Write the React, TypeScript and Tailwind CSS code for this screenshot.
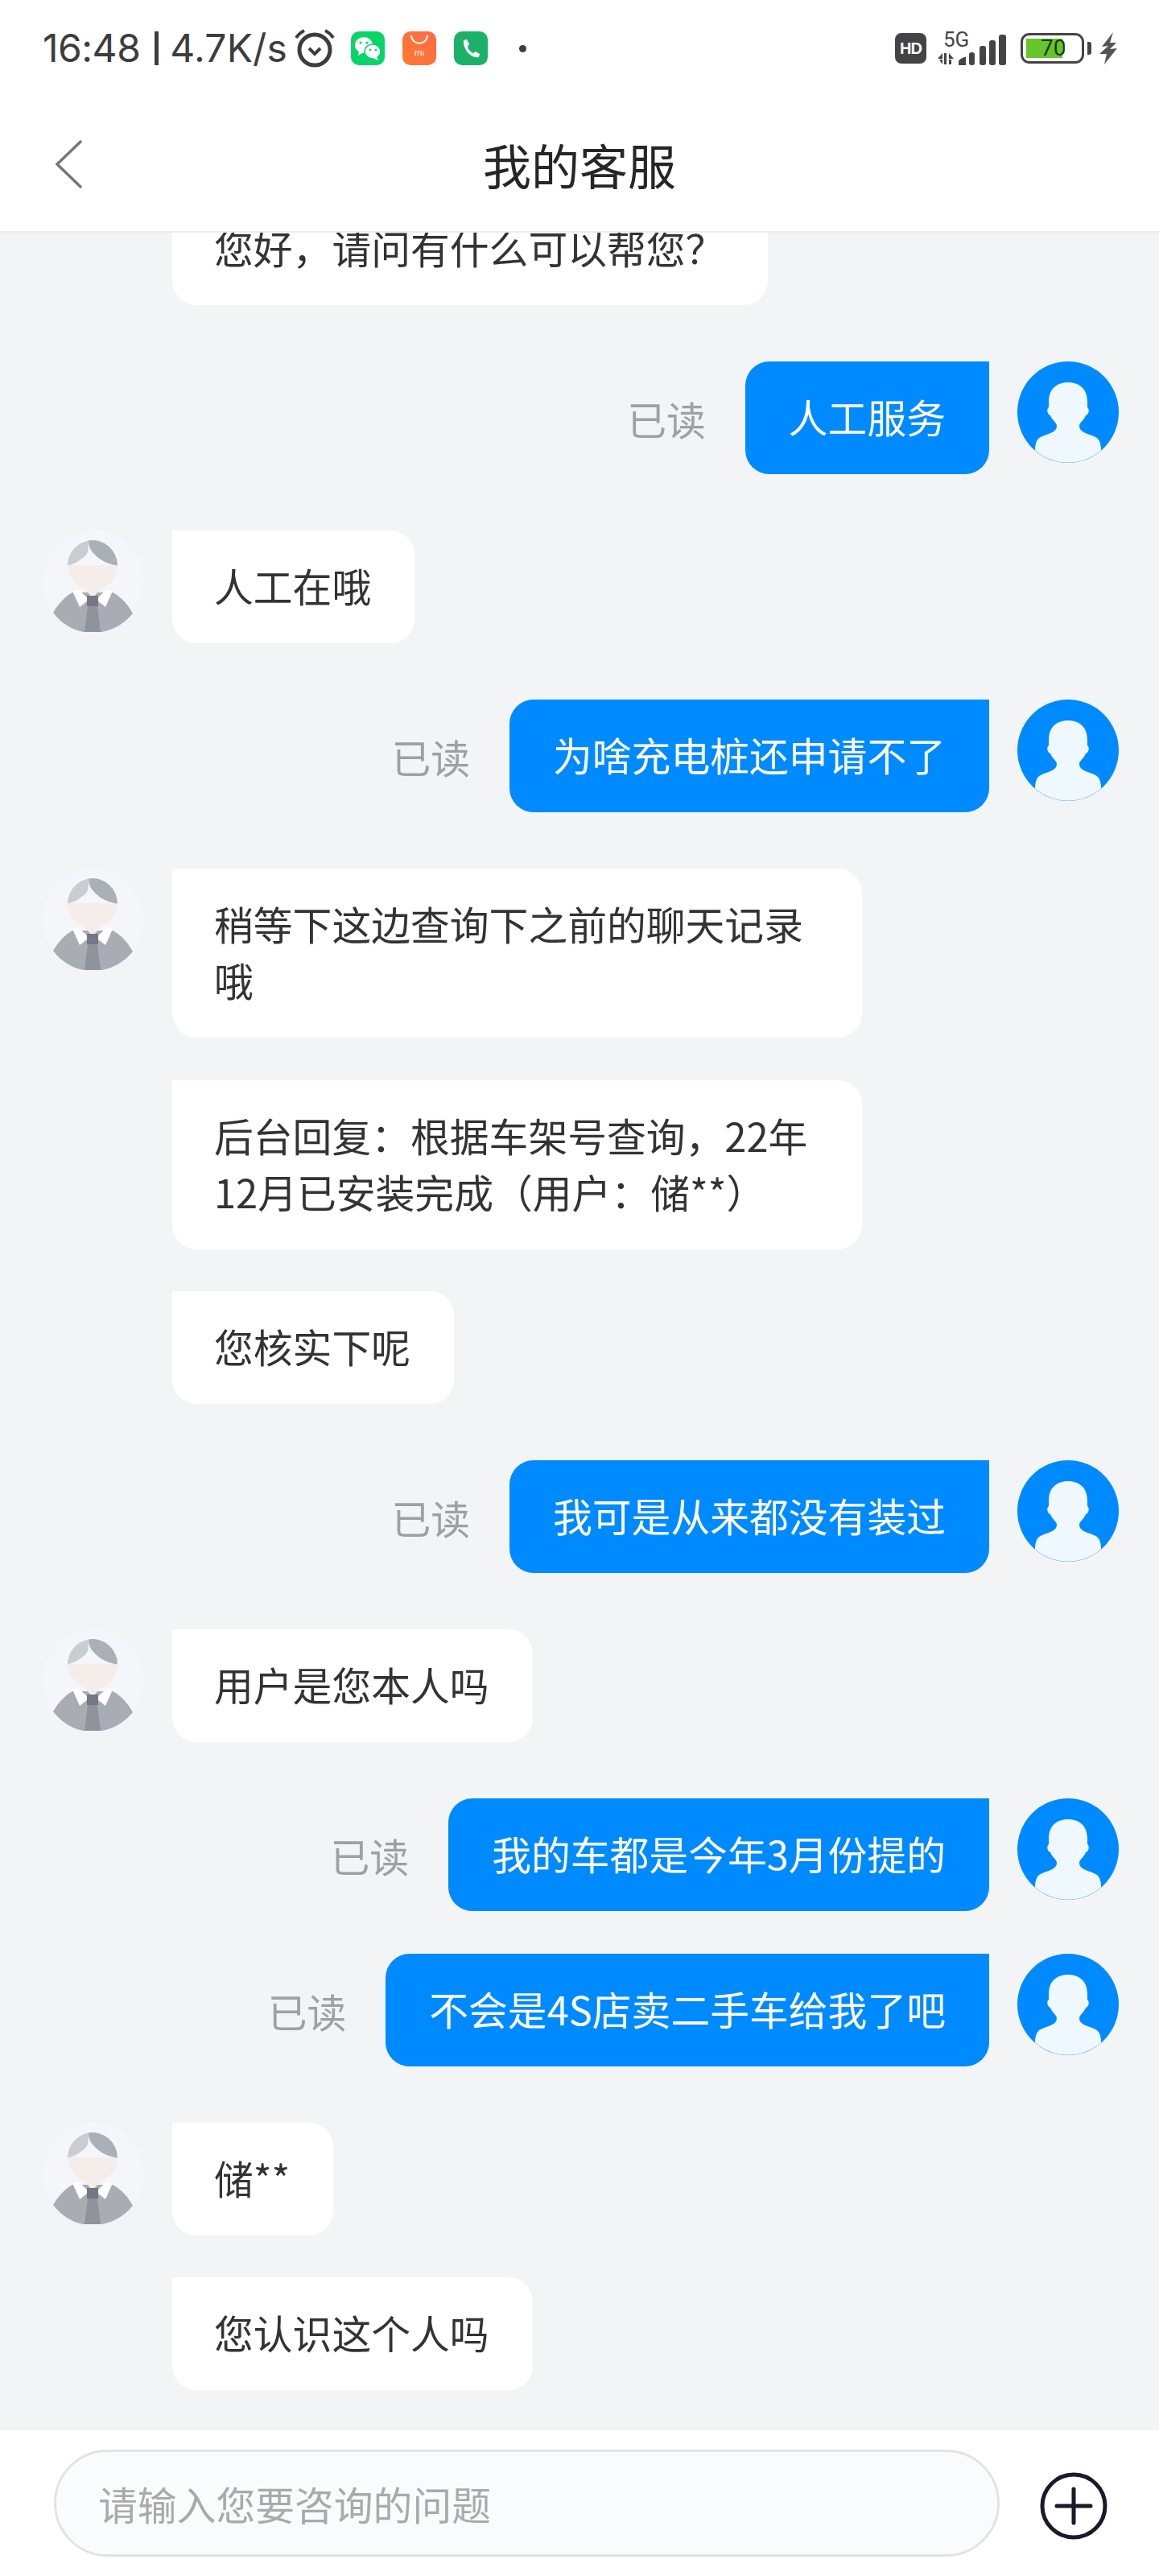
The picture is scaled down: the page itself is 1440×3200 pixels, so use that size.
const CJK = "font-['Noto_Sans_CJK_SC','Noto_Sans',sans-serif]";

type Msg = { from: "me" | "agent"; text: string; mt: string; avatar?: boolean };

// 全角标点用转义写,避免被编辑器替换
const messages: Msg[] = [
  { from: "agent", text: "您好\uFF0C请问有什么可以帮您\uFF1F", mt: "mt-0" },
  { from: "me", text: "人工服务", mt: "mt-[70px]" },
  { from: "agent", text: "人工在哦", mt: "mt-[70px]", avatar: true },
  { from: "me", text: "为啥充电桩还申请不了", mt: "mt-[70px]" },
  { from: "agent", text: "稍等下这边查询下之前的聊天记录哦", mt: "mt-[70px]", avatar: true },
  { from: "agent", text: "后台回复\uFF1A根据车架号查询\uFF0C22年12月已安装完成\uFF08用户\uFF1A储**\uFF09", mt: "mt-[53px]" },
  { from: "agent", text: "您核实下呢", mt: "mt-[52px]" },
  { from: "me", text: "我可是从来都没有装过", mt: "mt-[70px]" },
  { from: "agent", text: "用户是您本人吗", mt: "mt-[70px]", avatar: true },
  { from: "me", text: "我的车都是今年3月份提的", mt: "mt-[70px]" },
  { from: "me", text: "不会是4S店卖二手车给我了吧", mt: "mt-[53px]" },
  { from: "agent", text: "储**", mt: "mt-[70px]", avatar: true },
  { from: "agent", text: "您认识这个人吗", mt: "mt-[52px]" },
];

function AgentAvatar() {
  return (
    <svg width="126" height="126" viewBox="0 0 126 126" className="shrink-0">
      <circle cx="63" cy="63" r="63" fill="#f5f6f9" />
      <path d="M13 102 C20 90 28 82 37 77 L87 77 C97 82 106 92 112 103 C100 118 82 127 62 127 C42 127 25 118 13 102 Z" fill="#a9acb3" />
      <path d="M31 43 A31 31 0 0 0 62 74 A31 31 0 0 0 93 43 Z" fill="#f4ede9" />
      <path d="M48 68 L76 68 L62 84 Z" fill="#f4ede9" />
      <path d="M31 43.5 A31.5 31.5 0 0 1 57 12.4 C56 22 60 28 47 36 C42 40 37 42 31 43.5 Z" fill="#c9cdd2" />
      <path d="M57 12.4 A31.5 31.5 0 0 1 93 43.5 C80 42 70 36 64 29 C60 25 57 20 57 12.4 Z" fill="#a9b0b8" />
      <path d="M37 75 L44 73 L55 83 L55 88 L46 95 Z" fill="#ffffff" />
      <path d="M87 75 L80 73 L69 83 L69 88 L78 95 Z" fill="#ffffff" />
      <path d="M56 94 L68 94 L72 126 L52 126 Z" fill="#90939c" />
      <rect x="55" y="81" width="14" height="13" fill="#757784" />
    </svg>
  );
}

function UserAvatar() {
  return (
    <svg width="126" height="126" viewBox="0 0 126 126" className="shrink-0">
      <circle cx="63" cy="63" r="63" fill="#008aff" />
      <path
        d="M63 26 C48 26 39 35 39 50 L39 57 C36 59 37 66 41 67 C43 73 49 76 49 80 C49 88 40 89 31 93 C25 95 22 100 22 110.5 A63 63 0 0 0 104 110.5 C104 100 101 95 95 93 C86 89 77 88 77 80 C77 76 83 73 85 67 C89 66 90 59 87 57 L87 50 C87 35 78 26 63 26 Z"
        fill="#f0f8ff"
      />
    </svg>
  );
}

function Row({ msg }: { msg: Msg }) {
  if (msg.from === "me") {
    return (
      <div className={`flex items-start justify-end ${msg.mt}`}>
        <div className="mr-[49px] flex h-[140px] items-center pt-[2px] text-[48.8px] text-[#a0a0a0]">已读</div>
        <div className="mr-[35px] rounded-b-[30px] rounded-tl-[30px] bg-[#008aff] px-[54px] pb-[37px] pt-[33px] text-[48.8px] leading-[70px] text-white">
          {msg.text}
        </div>
        <UserAvatar />
      </div>
    );
  }
  return (
    <div className={`flex items-start ${msg.mt}`}>
      {/* 连续消息不重复显示头像 */}
      {msg.avatar ? <AgentAvatar /> : <div className="w-[126px] shrink-0" />}
      <div className="ml-[35px] max-w-[857px] rounded-[30px] rounded-tl-none bg-white pb-[37px] pl-[52px] pr-[54px] pt-[33px] text-[48.8px] leading-[70px] text-[#333333]">
        {msg.text}
      </div>
    </div>
  );
}

function StatusBar() {
  return (
    <div className="flex h-[120px] items-center justify-between pl-[53px] pr-[52px]">
      <div className="flex items-center font-['Inter',sans-serif] text-[48px] leading-none text-[#3d3d3d]">
        <span className="tracking-[-0.5px]">16:48</span>
        <span className="ml-[18px] h-[42px] w-[5px] bg-[#3d3d3d]" />
        <span className="ml-[14px] tracking-[0.2px]">4.7K/s</span>
        <svg width="52" height="48" viewBox="0 0 52 48" className="ml-[8px]">
          <circle cx="26" cy="26" r="19" fill="none" stroke="#3d3d3d" strokeWidth="5" />
          <path d="M19 24 L26 31 L33 24" fill="none" stroke="#3d3d3d" strokeWidth="4" />
          <path d="M3 11 C6 6 9 4 13 2" fill="none" stroke="#3d3d3d" strokeWidth="4" />
          <path d="M49 11 C46 6 43 4 39 2" fill="none" stroke="#3d3d3d" strokeWidth="4" />
        </svg>
        <svg width="42" height="42" viewBox="0 0 42 42" className="ml-[19px]">
          <rect width="42" height="42" rx="10" fill="#07d568" />
          <ellipse cx="16" cy="17" rx="11" ry="10" fill="#ffffff" />
          <path d="M10 24 L9 30 L16 26 Z" fill="#ffffff" />
          <ellipse cx="27" cy="25" rx="10" ry="9" fill="#ffffff" stroke="#07d568" strokeWidth="1.5" />
          <path d="M32 31 L34 36 L27 33 Z" fill="#ffffff" />
          <circle cx="12" cy="14" r="1.6" fill="#07d568" />
          <circle cx="20" cy="14" r="1.6" fill="#07d568" />
          <circle cx="24" cy="23" r="1.4" fill="#07d568" />
          <circle cx="31" cy="23" r="1.4" fill="#07d568" />
        </svg>
        <svg width="42" height="42" viewBox="0 0 42 42" className="ml-[22px]">
          <defs>
            <linearGradient id="mi" x1="0" y1="1" x2="1" y2="0">
              <stop offset="0" stopColor="#ff7a30" />
              <stop offset="1" stopColor="#ff6a45" />
            </linearGradient>
          </defs>
          <rect width="42" height="42" rx="10" fill="url(#mi)" />
          <path d="M11 5 C12 18 30 18 31 5" fill="none" stroke="#ffffff" strokeWidth="2" />
          <path d="M16 30 L16 25 L23 25 L23 30 M19.5 26 L19.5 30 M26 25 L26 30" fill="none" stroke="#ffffff" strokeWidth="1.2" />
        </svg>
        <svg width="42" height="42" viewBox="0 0 42 42" className="ml-[22px]">
          <rect width="42" height="42" rx="10" fill="#1bb169" />
          <path d="M12 11 L16 10 L19 16 L17 19 C18 23 20 25 24 27 L27 25 L32 28 L31 32 C22 34 11 23 12 11 Z" fill="#ffffff" />
        </svg>
        <span className="ml-[39px] h-[9px] w-[9px] rounded-full bg-[#3d3d3d]" />
      </div>
      <div className="flex items-center">
        <div className="flex h-[38px] w-[39px] items-center justify-center rounded-[8px] bg-[#444444] font-['Liberation_Sans',sans-serif] text-[20px] font-bold tracking-[-1px] text-white">
          HD
        </div>
        <div className="relative ml-[14px] h-[42px] w-[85px]">
          <span className="absolute left-[7px] top-[-4px] font-['Roboto',sans-serif] text-[26px] leading-[28px] text-[#444444]">5G</span>
          <svg width="85" height="42" viewBox="0 0 85 42" className="absolute inset-0">
            <path d="M0 34 L6 34 L6 27 Z M6 35 L6 41 L2 35 Z" fill="#444444" />
            <path d="M8 27 L11 27 L11 41 L8 41 Z M14 27 L20 34 L14 34 Z M14 35 L17 35 L17 41 L14 41 Z" fill="#444444" />
            <path d="M26 42 L26 37 Q26 35 33 32 L35 32 L35 42 Z" fill="#444444" />
            <rect x="39" y="26" width="7" height="16" rx="3" fill="#444444" />
            <rect x="52" y="18" width="8" height="24" rx="3" fill="#444444" />
            <rect x="64" y="11" width="8" height="31" rx="3" fill="#444444" />
            <rect x="76" y="4" width="9" height="38" rx="3" fill="#444444" />
          </svg>
        </div>
        <div className="relative ml-[18px] flex h-[38px] w-[79px] items-center rounded-[11px] border-[3px] border-[#444444] p-[4px]">
          <div className="h-full w-[45px] bg-[#67c52c]" />
          <span className="absolute left-[22px] top-0 font-['Roboto',sans-serif] text-[28px] leading-[32px] text-[#1c3a10]">70</span>
        </div>
        <div className="ml-[4px] h-[16px] w-[5px] rounded-r-[3px] bg-[#444444]" />
        <svg width="22" height="40" viewBox="0 0 22 40" className="ml-[10px]">
          <path d="M17 0 L3 18 L11 17 L0 27 L9 27 L6 40 L22 20 L13 21 L21 13 L13 13 Z" fill="#555555" />
        </svg>
      </div>
    </div>
  );
}

export default function App() {
  return (
    <div className={`flex h-[3200px] w-[1440px] flex-col overflow-hidden bg-white ${CJK}`}>
      <StatusBar />
      <div className="grid h-[169px] shrink-0 grid-cols-[1fr_auto_1fr] items-center border-b-[2px] border-[#ececee] pl-[69px]">
        <svg width="33" height="60" viewBox="0 0 33 60">
          <path d="M31 2 L2 30 L31 58" fill="none" stroke="#777777" strokeWidth="3.5" strokeLinecap="round" />
        </svg>
        <div className="-ml-[69px] text-[60px] leading-none text-[#262626]">我的客服</div>
      </div>

      <div className="flex min-h-0 flex-1 flex-col justify-end overflow-hidden bg-[#f3f4f6] pb-[50px] pl-[53px] pr-[50px]">
        {messages.map((m) => (
          <Row key={m.text} msg={m} />
        ))}
      </div>

      <div className="flex h-[181px] shrink-0 items-center bg-white pl-[67px]">
        <div className="flex h-[133px] w-[1175px] items-center rounded-full border-[3px] border-[#e2e3e5] bg-[#fafbfd] pl-[52px] text-[48.8px] text-[#aaaaaa]">
          请输入您要咨询的问题
        </div>
        <svg width="84" height="84" viewBox="0 0 84 84" className="ml-[50px] mt-[6px]">
          <circle cx="42" cy="42" r="39" fill="none" stroke="#1a1a2a" strokeWidth="5" />
          <path d="M21 42 L63 42 M42 21 L42 63" stroke="#1a1a2a" strokeWidth="5" strokeLinecap="round" />
        </svg>
      </div>
    </div>
  );
}
